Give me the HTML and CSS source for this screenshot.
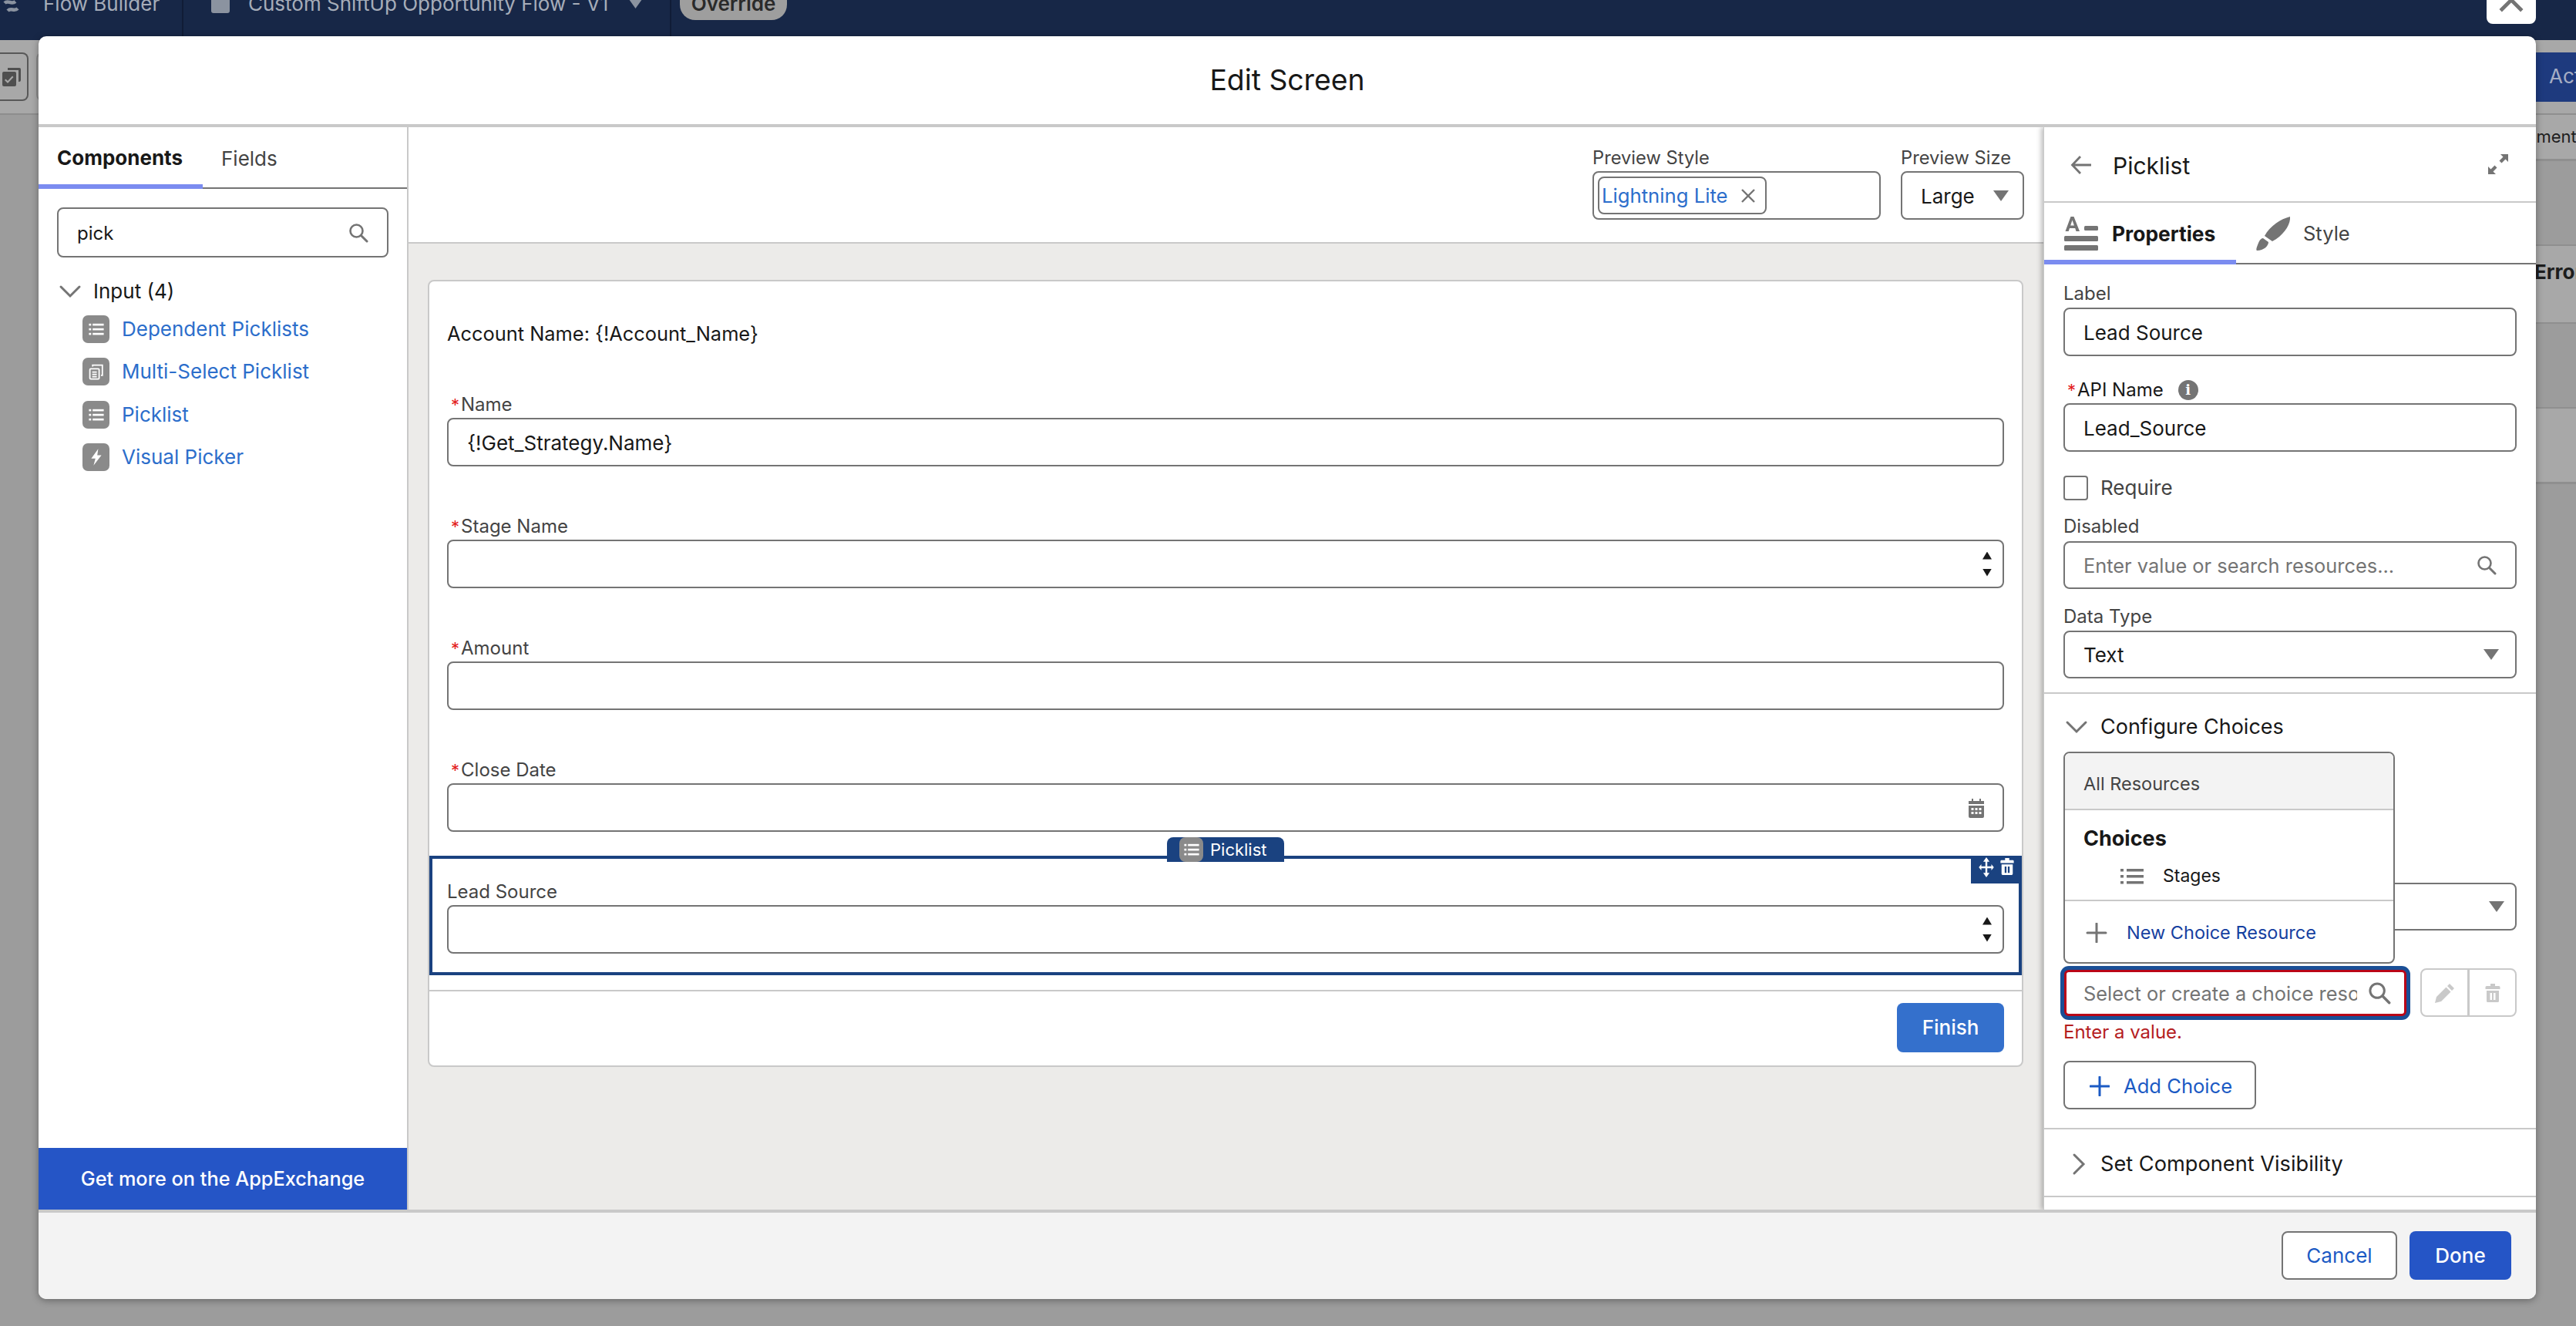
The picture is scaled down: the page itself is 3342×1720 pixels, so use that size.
FILE: index.html
```html
<!DOCTYPE html>
<html lang="en">
<head>
<meta charset="utf-8">
<title>Edit Screen</title>
<link rel="stylesheet" href="styles.css">
</head>
<body>
<svg class="defs" width="0" height="0" aria-hidden="true">
  <symbol id="i-search" viewBox="0 0 26 26"><circle cx="10.5" cy="10.5" r="8" fill="none" stroke="currentColor" stroke-width="2.6"/><path d="M16.5 16.5 24 24" fill="none" stroke="currentColor" stroke-width="3" stroke-linecap="round"/></symbol>
  <symbol id="i-list" viewBox="0 0 20 20"><g fill="currentColor"><rect x="2" y="4" width="2.4" height="2.2"/><rect x="2" y="9" width="2.4" height="2.2"/><rect x="2" y="14" width="2.4" height="2.2"/><rect x="6" y="4" width="12" height="2.2"/><rect x="6" y="9" width="12" height="2.2"/><rect x="6" y="14" width="12" height="2.2"/></g></symbol>
  <symbol id="i-multi" viewBox="0 0 20 20"><g fill="none" stroke="currentColor" stroke-width="1.5"><rect x="3" y="7" width="10" height="11" rx="1"/><path d="M6 4.5V3h10.5v11H15"/><path d="M5.5 10.5h5M5.5 13h5M5.5 15.5h5"/></g></symbol>
  <symbol id="i-bolt" viewBox="0 0 20 20"><path fill="currentColor" d="M12 1 4.500 11.500H9L7 19l8.500-11H11z"/></symbol>
  <symbol id="i-trash" viewBox="0 0 22 26"><g fill="currentColor"><path d="M8 1h6v3h5a1.500 1.500 0 0 1 1.500 1.500V8h-19V5.500A1.500 1.500 0 0 1 3 4h5z"/><path fill-rule="evenodd" d="M3 10h16v13.500a1.500 1.500 0 0 1-1.500 1.500h-13A1.500 1.500 0 0 1 3 23.500zm4.500 3v9h2.500v-9zm4.500 0v9h2.500v-9z"/></g></symbol>
  <symbol id="i-down" viewBox="0 0 30 20"><path d="M3 4 15 16 27 4" fill="none" stroke="currentColor" stroke-width="3" stroke-linecap="round"/></symbol>
  <symbol id="i-right" viewBox="0 0 20 30"><path d="M4 3 16 15 4 27" fill="none" stroke="currentColor" stroke-width="3" stroke-linecap="round"/></symbol>
  <symbol id="i-plus" viewBox="0 0 26 26"><path d="M13 1v24M1 13h24" fill="none" stroke="currentColor" stroke-width="3" stroke-linecap="round"/></symbol>
  <symbol id="i-caret" viewBox="0 0 20 14"><path fill="currentColor" d="M0 0h20L10 14z"/></symbol>
</svg>

<div class="backdrop">
  <nav class="nav">
    <span class="nav-item nav-first"><svg class="nav-logo" viewBox="0 0 24 24"><path d="M2 4c5-5 8 3 14-2M6 14c5-5 8 2 13-3" fill="none" stroke="currentColor" stroke-width="4.500"/></svg>Flow Builder</span>
    <span class="nav-item nav-flow"><span class="nav-doc"></span>Custom ShiftUp Opportunity Flow - V1<svg class="nav-caret"><use href="#i-caret"/></svg></span>
    <span class="nav-item nav-last"><span class="nav-pill">Override</span></span>
  </nav>
  <div class="page">
    <div class="strip-left">
      <span class="ghost-btn"><svg class="ghost-icon" viewBox="0 0 24 24"><path fill="currentColor" fill-rule="evenodd" d="M7 0h15a2 2 0 0 1 2 2v14a2 2 0 0 1-2 2h-1V3H7zM2 5h14a2 2 0 0 1 2 2v15a2 2 0 0 1-2 2H2a2 2 0 0 1-2-2V7a2 2 0 0 1 2-2zm2.500 9.500L3 16l4 4 7.500-8L13 10.500 7 17z"/></svg></span>
      <span class="ghost-btn ghost-next"></span>
    </div>
    <div class="strip-right">
      <div class="strip-head"><span class="act-btn">Activate</span></div>
      <div class="strip-row r-a">Elements</div>
      <div class="strip-row r-b"></div>
      <div class="strip-row r-c"><b>Errors</b></div>
      <div class="strip-row r-d"></div>
      <div class="strip-row r-e"></div>
    </div>
  </div>
</div>

<div class="close-btn"><svg class="close-x" viewBox="0 0 32 32"><path d="M3 3l26 26M29 3 3 29" fill="none" stroke="currentColor" stroke-width="4.500"/></svg></div>

<section class="modal">
  <header class="modal-head"><h1>Edit Screen</h1></header>
  <div class="modal-body">

    <aside class="left">
      <div class="tabs">
        <span class="tab tab-on tab-comp">Components</span>
        <span class="tab tab-fields">Fields</span>
      </div>
      <div class="left-search">
        <div class="box box-search"><span class="val">pick</span><svg class="ic-search"><use href="#i-search"/></svg></div>
      </div>
      <div class="group-head"><svg class="ic-chev-d"><use href="#i-down"/></svg><span>Input (4)</span></div>
      <ul class="comp-list">
        <li><span class="chip"><svg><use href="#i-list"/></svg></span><a>Dependent Picklists</a></li>
        <li><span class="chip"><svg><use href="#i-multi"/></svg></span><a>Multi-Select Picklist</a></li>
        <li><span class="chip"><svg><use href="#i-list"/></svg></span><a>Picklist</a></li>
        <li><span class="chip"><svg><use href="#i-bolt"/></svg></span><a>Visual Picker</a></li>
      </ul>
      <div class="appex">Get more on the AppExchange</div>
    </aside>

    <main class="center">
      <div class="preview-bar">
        <div class="pv pv-style">
          <label>Preview Style</label>
          <div class="box pv-box"><span class="pill">Lightning Lite<svg class="pill-x" viewBox="0 0 20 20"><path d="M2 2l16 16M18 2 2 18" fill="none" stroke="currentColor" stroke-width="2.400"/></svg></span></div>
        </div>
        <div class="pv pv-size">
          <label>Preview Size</label>
          <div class="box pv-sel"><span class="val">Large</span><svg class="caret"><use href="#i-caret"/></svg></div>
        </div>
      </div>
      <div class="canvas">
        <div class="card">
          <div class="card-body">
            <p class="display">Account Name: {!Account_Name}</p>
            <div class="fld">
              <label><i>*</i>Name</label>
              <div class="box"><span class="val">{!Get_Strategy.Name}</span></div>
            </div>
            <div class="fld">
              <label><i>*</i>Stage Name</label>
              <div class="box box-end"><span class="spin"><b></b><b></b></span></div>
            </div>
            <div class="fld">
              <label><i>*</i>Amount</label>
              <div class="box"></div>
            </div>
            <div class="fld fld-date">
              <label><i>*</i>Close Date</label>
              <div class="box box-end">
                <svg class="ic-cal" viewBox="0 0 24 26"><g fill="currentColor"><path d="M2 4h4V1h2v3h8V1h2v3h4v4H2z"/><path fill-rule="evenodd" d="M2 10h20v14a2 2 0 0 1-2 2H4a2 2 0 0 1-2-2zm3.500 3v3h3v-3zm5 0v3h3v-3zm5 0v3h3v-3zm-10 5v3h3v-3zm5 0v3h3v-3zm5 0v3h3v-3z"/></g></svg>
              </div>
            </div>
          </div>
          <div class="selected">
            <span class="sel-tag"><span class="sel-chip"><svg><use href="#i-list"/></svg></span>Picklist</span>
            <span class="sel-actions">
              <svg class="ic-move" viewBox="0 0 24 32"><path fill="currentColor" d="M12 0l5 7h-3.500v7.500H20V11l4 5-4 5v-3.500h-6.500V25H17l-5 7-5-7h3.500v-7.500H4V21l-4-5 4-5v3.500h6.500V7H7z"/></svg>
              <svg class="ic-seltrash"><use href="#i-trash"/></svg>
            </span>
            <label>Lead Source</label>
            <div class="box box-end"><span class="spin"><b></b><b></b></span></div>
          </div>
          <div class="card-foot"><span class="finish">Finish</span></div>
        </div>
      </div>
    </main>

    <aside class="right">
      <div class="r-head">
        <svg class="ic-back" viewBox="0 0 28 28"><path d="M27 14H3M13 3 2.500 14 13 25" fill="none" stroke="currentColor" stroke-width="2.800"/></svg>
        <h2>Picklist</h2>
        <svg class="ic-expand" viewBox="0 0 28 28"><g fill="currentColor"><path d="M17 1h10v10l-3.500-3.500-5 5-3-3 5-5zM1 27V17l3.500 3.500 5-5 3 3-5 5L11 27z"/></g></svg>
      </div>
      <div class="r-tabs">
        <span class="r-tab r-tab-on">
          <svg class="ic-prop" viewBox="0 0 44 44"><g fill="currentColor"><path d="M8.500 0h4L20 19h-4.500l-1.300-4H7l-1.300 4H1.500zM8.200 11.500h4.700L10.500 4.500z"/><rect x="26" y="12" width="18" height="6" rx="1.500"/><rect y="25" width="44" height="7" rx="1.500"/><rect y="37" width="44" height="7" rx="1.500"/></g></svg>
          Properties
        </span>
        <span class="r-tab r-tab-style">
          <svg class="ic-brush" viewBox="0 0 44 44"><path fill="currentColor" d="M44 0C45 10 36 24 21 32L11 25C18 12 32 3 44 0ZM9 28L16 33C16 38 10 44 1 44C-1 44 2 36 4 32C5 30 7 28 9 28Z"/></svg>
          Style
        </span>
      </div>
      <div class="r-form">
        <div class="rf rf-label">
          <label>Label</label>
          <div class="box"><span class="val">Lead Source</span></div>
        </div>
        <div class="rf rf-api">
          <label><i>*</i>API Name<span class="info">i</span></label>
          <div class="box"><span class="val">Lead_Source</span></div>
        </div>
        <div class="check-row"><span class="check"></span><span>Require</span></div>
        <div class="rf rf-dis">
          <label>Disabled</label>
          <div class="box"><span class="ph">Enter value or search resources...</span><svg class="ic-search"><use href="#i-search"/></svg></div>
        </div>
        <div class="rf rf-type">
          <label>Data Type</label>
          <div class="box"><span class="val">Text</span><svg class="caret"><use href="#i-caret"/></svg></div>
        </div>
      </div>
      <div class="sect sect-choices">
        <div class="sect-head"><svg class="ic-chev-d"><use href="#i-down"/></svg><span>Configure Choices</span></div>
        <div class="box box-disp"><svg class="caret"><use href="#i-caret"/></svg></div>
        <div class="menu">
          <div class="menu-top">All Resources</div>
          <div class="menu-mid">
            <div class="menu-title">Choices</div>
            <div class="menu-item"><svg class="ic-mlist" viewBox="0 0 30 20"><g fill="currentColor"><rect y="0" width="4" height="3.500"/><rect y="8" width="4" height="3.500"/><rect y="16" width="4" height="3.500"/><rect x="8" y="0" width="22" height="3.500"/><rect x="8" y="8" width="22" height="3.500"/><rect x="8" y="16" width="22" height="3.500"/></g></svg><span>Stages</span></div>
          </div>
          <div class="menu-new"><svg class="ic-mplus"><use href="#i-plus"/></svg><span>New Choice Resource</span></div>
        </div>
        <div class="choice-row">
          <div class="err-box"><span class="ph ph-clip">Select or create a choice resource</span><svg class="ic-search ic-err"><use href="#i-search"/></svg></div>
          <div class="btn-group">
            <span class="ib"><svg viewBox="0 0 26 26"><path fill="currentColor" d="M19 1l6 6-3 3-6-6zM14.500 5.500l6 6L8 24l-8 2 2-8z"/></svg></span>
            <span class="ib"><svg><use href="#i-trash"/></svg></span>
          </div>
        </div>
        <div class="err-msg">Enter a value.</div>
        <div class="add-btn"><svg><use href="#i-plus"/></svg><span>Add Choice</span></div>
      </div>
      <div class="sect-closed"><svg class="ic-chev-r"><use href="#i-right"/></svg><span>Set Component Visibility</span></div>
    </aside>
  </div>
  <footer class="modal-foot">
    <span class="btn btn-neutral">Cancel</span>
    <span class="btn btn-brand">Done</span>
  </footer>
</section>
</body>
</html>
```

FILE: styles.css
```css
* { box-sizing: border-box; }
html, body { margin: 0; padding: 0; }
body {
  width: 3342px; height: 1720px; overflow: hidden; position: relative;
  background: #9c9c9c; color: #181818;
  font-family: Inter, "Liberation Sans", sans-serif; font-size: 26px; line-height: 1.3;
}
.defs { position: absolute; }
svg { display: block; flex: none; }
label { display: block; }
p, h1, h2, ul { margin: 0; padding: 0; }
i { font-style: normal; }
a { color: #2c6ecb; }

/* Backdrop */
.backdrop { height: 1720px; display: flex; flex-direction: column; }
.nav { height: 52px; background: #172747; display: flex; color: #a6adb9; overflow: hidden; flex: none; }
.nav-item { display: flex; align-items: center; height: 47px; border-right: 2px solid #101c36; font-size: 26px; white-space: nowrap; }
.nav-first { width: 238px; padding: 0 0 38px 4px; }
.nav-logo { width: 24px; height: 24px; margin: 15px 28px 0 0; color: #8b93a0; }
.nav-flow { width: 633px; padding: 0 0 38px 36px; }
.nav-doc { width: 24px; height: 42px; margin-top: -17px; margin-right: 24px; border-radius: 3px; background: #8b93a0; }
.nav-caret { width: 19px; height: 13px; color: #8b93a0; margin: 0 0 0 26px; }
.nav-last { border-right: 0; padding: 0 0 38px 11px; }
.nav-pill { width: 139px; height: 42px; flex: none; display: flex; align-items: center; justify-content: center; background: #9e9e9e; color: #2a2a2a; border-radius: 0 0 20px 20px; font-weight: 600; }
.page { flex: 1; display: flex; justify-content: space-between; }
.strip-left { width: 50px; height: 97px; border-bottom: 2px solid #8d8d8d; padding-top: 16px; display: flex; background: #a8a8a8; overflow: hidden; }
.ghost-btn { flex: none; width: 37px; height: 63px; border: 2px solid #585858; border-left: 0; border-radius: 0 8px 8px 0; margin-right: 10px; display: flex; align-items: center; justify-content: flex-end; padding-right: 8px; }
.ghost-next { border: 2px solid #8a8a8a; border-right: 0; border-radius: 8px 0 0 8px; }
.ghost-icon { width: 24px; height: 24px; color: #4f4f4f; margin-left: -8px; }
.strip-right { width: 52px; overflow: hidden; font-size: 26px; color: #1d1d1d; }
.strip-head { height: 97px; padding-top: 16px; background: #a8a8a8; border-bottom: 2px solid #8f8f8f; }
.act-btn { display: block; width: 140px; height: 64px; background: #1e3a7e; color: #a5adc4; padding: 14px 0 0 17px; }
.strip-row { background: #a8a8a8; white-space: nowrap; }
.r-a { height: 60px; line-height: 56px; margin-left: -31px; border-bottom: 3px solid #8f8f8f; font-size: 22px; }
.r-b { height: 110px; background: #9c9c9c; border-bottom: 2px solid #8f8f8f; }
.r-c { height: 101px; padding-top: 17px; margin-left: -2px; border-bottom: 2px solid #8f8f8f; }
.r-d { height: 110px; background: #9c9c9c; border-bottom: 2px solid #8f8f8f; }
.r-e { height: 98px; border-bottom: 3px solid #8f8f8f; }

.close-btn { position: absolute; left: 3226px; top: -34px; width: 64px; height: 65px; background: #fff; border-radius: 0 0 8px 8px; display: flex; justify-content: center; align-items: flex-end; padding-bottom: 14px; overflow: hidden; }
.close-x { width: 34px; height: 34px; color: #747474; }

/* Modal */
.modal { position: absolute; left: 50px; top: 47px; width: 3240px; height: 1638px; background: #fff; border-radius: 10px; box-shadow: 0 2px 10px rgba(0,0,0,.35); display: flex; flex-direction: column; overflow: hidden; }
.modal-head { height: 118px; flex: none; border-bottom: 4px solid #c9c9c9; display: flex; align-items: center; justify-content: center; }
.modal-head h1 { font-size: 37.300px; font-weight: 400; line-height: 1.25; }
.modal-body { height: 1404px; flex: none; display: flex; }
.modal-foot { flex: 1; background: #f3f3f3; border-top: 4px solid #c9c9c9; display: flex; justify-content: flex-end; align-items: flex-start; gap: 16px; padding: 24px 32px 0 0; }

/* Generic box */
.box { position: relative; height: 63px; border: 2px solid #747474; border-radius: 8px; background: #fff; display: flex; align-items: center; padding: 0 24px; }
.box-end { justify-content: flex-end; padding: 0 14px; }
.val { color: #181818; padding-top: 2px; }
.ph { color: #747474; white-space: nowrap; padding-top: 2px; font-size: 25.400px; }
.ic-search { width: 26px; height: 28px; color: #747474; margin-left: auto; }
.caret { width: 20px; height: 14px; color: #747474; margin-left: auto; margin-right: -3px; }

/* Left panel */
.left { width: 480px; flex: none; border-right: 2px solid #c9c9c9; display: flex; flex-direction: column; }
.tabs { height: 80px; display: flex; border-bottom: 2px solid #747474; flex: none; }
.tab { height: 80px; display: flex; align-items: center; color: #444; }
.tab-on { color: #181818; font-weight: 700; }
.tab-comp { width: 213px; padding-left: 24px; border-bottom: 6px solid #7b8cf0; font-size: 26px; padding-top: 6px; }
.tab-fields { padding-left: 24px; padding-top: 2px; }
.left-search { padding: 24px 24px 0; }
.box-search { height: 65px; padding: 0 24px 0 24px; }
.box-search .val { font-size: 24px; }
.group-head { display: flex; align-items: center; padding: 18px 0 0 26px; height: 70px; flex: none; }
.group-head span { margin-left: 15px; }
.ic-chev-d { width: 30px; height: 20px; color: #747474; }
.comp-list { list-style: none; padding: 5px 0 0 57px; flex: 1; }
.comp-list li { height: 55.400px; display: flex; align-items: flex-start; }
.comp-list a { margin-left: 16px; line-height: 36px; }
.chip { width: 35px; height: 36px; background: #8a8a8a; border-radius: 7px; color: #fff; display: flex; align-items: center; justify-content: center; }
.chip svg { width: 24px; height: 24px; }
.appex { height: 80px; flex: none; background: #2555c6; color: #fff; display: flex; align-items: center; justify-content: center; font-weight: 500; font-size: 25.300px; }

/* Center */
.center { flex: 1; min-width: 0; display: flex; flex-direction: column; }
.preview-bar { height: 151px; flex: none; background: #fff; border-bottom: 2px solid #c9c9c9; display: flex; justify-content: flex-end; gap: 26px; padding: 22px 25px 0 0; }
.pv label { height: 35px; line-height: 35px; color: #444; font-size: 23.700px; }
.pv-style { width: 374px; }
.pv-size { width: 160px; }
.pv-box { padding: 0 0 0 5px; }
.pill { display: flex; align-items: center; height: 49px; width: 219px; border: 2px solid #747474; border-radius: 8px; padding: 0 0 0 3px; color: #2c6ecb; white-space: nowrap; font-size: 25.700px; }
.pill-x { width: 20px; height: 20px; color: #747474; margin-left: auto; margin-right: 12px; }
.pv-sel { padding: 0 21px 0 24px; }
.canvas { flex: 1; background: #ecebe9; padding: 47px 26px 0 25px; }
.card { background: #fff; border: 2px solid #c9c9c9; border-radius: 8px; }
.card-body { padding: 48px 23px 31px; }
.display { line-height: 40px; margin-bottom: 55px; font-size: 25.400px; }
.fld { margin-bottom: 61px; }
.fld-date { margin-bottom: 0; }
.fld label, .selected label { height: 34px; line-height: 34px; color: #444; font-size: 24px; }
i { color: #e3201c; font-size: 22px; margin: 0 2px 0 5px; }
.spin { display: flex; flex-direction: column; gap: 12px; }
.spin b { display: block; width: 12px; height: 10px; background: #181818; clip-path: polygon(50% 0, 100% 100%, 0 100%); }
.spin b + b { clip-path: polygon(0 0, 100% 0, 50% 100%); }
.ic-cal { width: 24px; height: 26px; color: #747474; margin-right: 8px; }
.selected { position: relative; border: 4px solid #1a4280; padding: 26px 19px 24px; margin: 0 0 19px; }
.sel-tag { position: absolute; left: 953px; top: -28px; width: 152px; height: 32px; background: #1a4280; color: #fff; border-radius: 8px 8px 0 0; display: flex; align-items: center; font-size: 22px; padding-left: 16px; }
.sel-chip { width: 31px; height: 32px; background: #8a8a8a; border-radius: 8px; display: flex; align-items: center; justify-content: center; margin-right: 9px; }
.sel-chip svg { width: 24px; height: 24px; color: #fff; }
.sel-actions { position: absolute; right: -4px; top: -4px; width: 66px; height: 36px; background: #1a4280; color: #fff; display: flex; align-items: flex-start; padding: 0 0 0 10px; gap: 7px; }
.ic-move { width: 20px; height: 26px; margin-top: 2px; }
.ic-seltrash { width: 20px; height: 24px; margin-top: 2px; }
.card-foot { border-top: 2px solid #c9c9c9; padding: 15px 23px 17px 0; display: flex; justify-content: flex-end; }
.finish { width: 139px; height: 64px; background: #3470cc; color: #fff; border-radius: 8px; display: flex; align-items: center; justify-content: center; font-weight: 500; }

/* Right panel */
.right { width: 639px; flex: none; background: #fff; box-shadow: -3px 0 6px rgba(0,0,0,.25); position: relative; display: flex; flex-direction: column; overflow: hidden; border-left: 1px solid #c9c9c9; clip-path: inset(0 0 0 -12px); }
.r-head { height: 98px; flex: none; border-bottom: 2px solid #c9c9c9; display: flex; align-items: center; padding: 5px 35px 0 34px; }
.ic-back { width: 28px; height: 28px; color: #747474; margin-right: 27px; margin-top: -4px; }
.r-head h2 { font-size: 30px; font-weight: 400; }
.ic-expand { width: 28px; height: 28px; color: #747474; margin-left: auto; margin-top: -6px; }
.r-tabs { height: 80px; flex: none; display: flex; border-bottom: 2px solid #747474; }
.r-tab { display: flex; align-items: center; height: 80px; color: #444; }
.r-tab-on { width: 249px; padding: 6px 0 0 26px; color: #181818; font-weight: 700; border-bottom: 6px solid #7b8cf0; font-size: 26.400px; }
.ic-prop { width: 44px; height: 44px; color: #747474; margin-right: 18px; }
.r-tab-style { padding-left: 26px; font-size: 25.500px; }
.ic-brush { width: 44px; height: 44px; color: #747474; margin-right: 17px; }
.r-form { padding: 20px 25px 18px 25px; border-bottom: 2px solid #c9c9c9; flex: none; }
.rf label { height: 36px; line-height: 36px; color: #444; font-size: 24px; }
.rf-label { margin-bottom: 26px; }
.rf-api label { height: 35px; display: flex; align-items: center; color: #181818; }
.info { width: 26px; height: 26px; border-radius: 50%; background: #747474; color: #fff; margin-left: 19px; font: 700 18px/26px "DejaVu Serif", serif; text-align: center; }
.check-row { display: flex; align-items: center; margin-top: 31px; height: 32px; color: #444; }
.check { width: 32px; height: 32px; border: 2px solid #747474; border-radius: 4px; margin-right: 16px; }
.rf-dis { margin-top: 16px; }
.rf-dis .box { height: 62px; margin-top: 1px; }
.rf-type { margin-top: 18px; }
.rf-type .box { height: 62px; }
.sect { position: relative; padding: 0 25px; height: 565px; border-bottom: 2px solid #c9c9c9; flex: none; }
.sect-head { display: flex; align-items: center; height: 88px; padding-bottom: 3px; }
.sect-head span { margin-left: 16px; font-size: 27px; }
.sect-head .ic-chev-d { margin-left: 2px; }
.box-disp { margin-top: 157px; height: 62px; padding-right: 17px; }
.menu { position: absolute; left: 25px; top: 75px; width: 430px; height: 275px; background: #fff; border: 2px solid #747474; border-radius: 8px; overflow: hidden; }
.menu-top { height: 74px; background: #f3f3f3; border-bottom: 2px solid #c9c9c9; line-height: 80px; padding-left: 24px; font-size: 23.500px; color: #444; }
.menu-mid { height: 118px; border-bottom: 2px solid #c9c9c9; padding: 20px 0 0 24px; }
.menu-title { font-weight: 700; font-size: 27px; line-height: 34px; }
.menu-item { display: flex; align-items: center; padding-left: 48px; font-size: 23px; margin-top: 17px; height: 30px; }
.ic-mlist { width: 30px; height: 20px; color: #747474; margin-right: 25px; }
.menu-new { display: flex; align-items: center; height: 79px; padding: 3px 0 0 27px; color: #1540a0; font-size: 23.500px; }
.ic-mplus { width: 28px; height: 26px; color: #747474; margin-right: 25px; }
.choice-row { display: flex; align-items: center; margin-top: 49px; height: 63px; }
.err-box { width: 444px; height: 60px; margin: 0 18px 0 1px; border: 3px solid #ba0517; border-radius: 6px; box-shadow: 0 0 0 5px #1a4f96; display: flex; align-items: center; padding: 0 17px 0 22px; background: #fff; overflow: hidden; }
.ph-clip { display: block; width: 355px; overflow: hidden; }
.ic-err { width: 30px; height: 30px; }
.btn-group { display: flex; }
.ib { width: 63px; height: 63px; border: 2px solid #c9c9c9; border-radius: 8px; display: flex; align-items: center; justify-content: center; color: #c9c9c9; }
.ib:first-child { border-radius: 8px 0 0 8px; }
.ib + .ib { border-left: 2px solid #c9c9c9; border-radius: 0 8px 8px 0; margin-left: -1px; }
.ib svg { width: 26px; height: 26px; }
.err-msg { color: #b5201f; font-size: 24px; line-height: 32px; margin-top: 4px; }
.add-btn { display: flex; align-items: center; width: 250px; height: 63px; border: 2px solid #747474; border-radius: 8px; margin-top: 21px; color: #1b5ac4; padding: 2px 0 0 32px; font-size: 25.600px; }
.add-btn svg { width: 26px; height: 26px; margin-right: 18px; }
.sect-closed { display: flex; align-items: center; height: 88px; padding: 3px 0 0 35px; border-bottom: 2px solid #c9c9c9; flex: none; }
.sect-closed span { margin-left: 18px; font-size: 27.200px; }
.ic-chev-r { width: 20px; height: 30px; color: #747474; }

/* Footer buttons */
.btn { display: flex; align-items: center; justify-content: center; height: 63px; border-radius: 8px; }
.btn-neutral { width: 150px; background: #fff; border: 2px solid #747474; color: #1b5ac4; }
.btn-brand { width: 132px; background: #2555c6; color: #fff; font-weight: 500; }
```
